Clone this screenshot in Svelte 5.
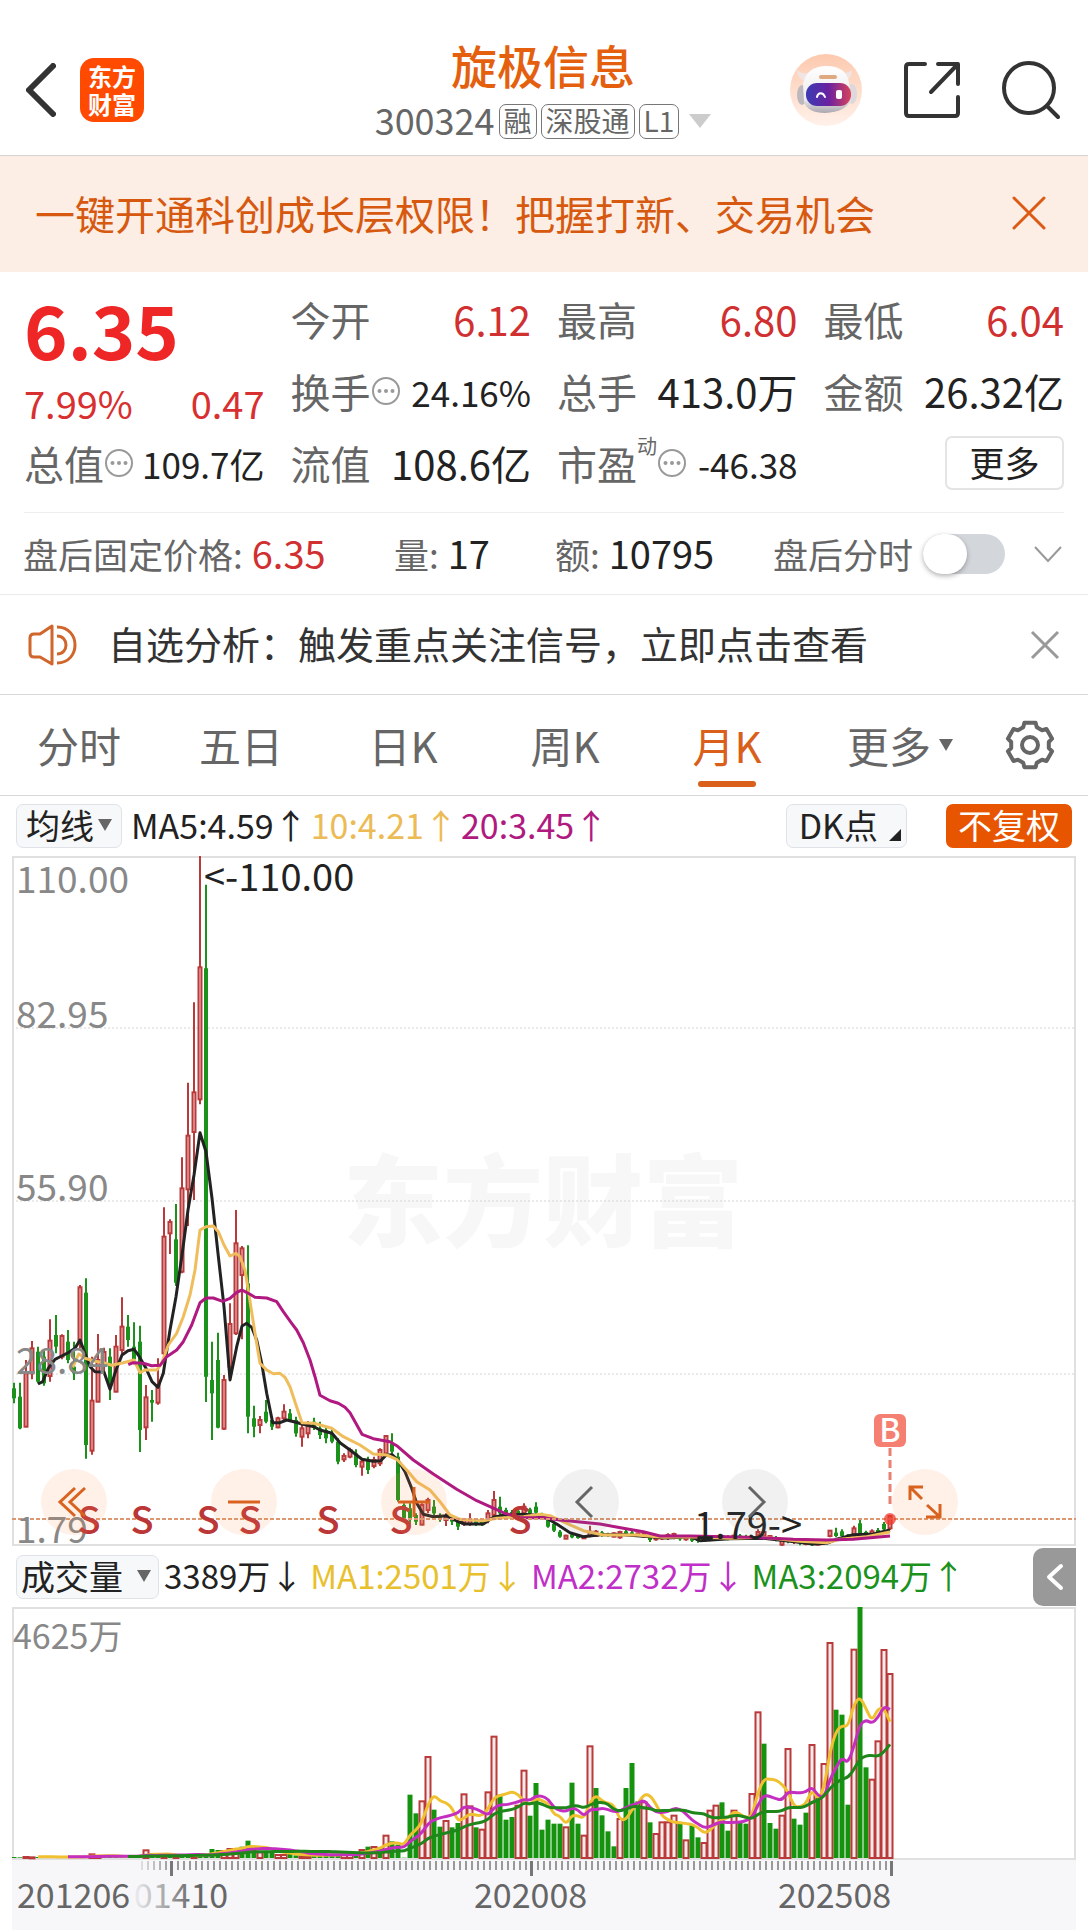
<script>
  // Candles: [direction, high, open/close top, open/close bottom, low], in thirds of a
  // pixel measured from the 55.90 grid line.
  const candles = [
    ['g', 548, 565, 595, 610], ['g', 548, 590, 685, 688], ['r', 480, 520, 680, 682], ['r', 423, 445, 520, 538],
    ['g', 440, 455, 545, 550], ['g', 450, 470, 550, 557], ['r', 358, 422, 528, 545], ['g', 345, 405, 440, 460],
    ['r', 403, 408, 470, 478], ['g', 390, 425, 480, 490], ['g', 425, 500, 520, 540], ['r', 255, 262, 430, 445],
    ['g', 235, 278, 735, 776], ['r', 470, 602, 752, 764], ['r', 402, 480, 605, 607], ['r', 443, 456, 490, 515],
    ['g', 445, 470, 555, 600], ['r', 405, 440, 575, 577], ['r', 292, 380, 450, 462], ['g', 345, 380, 420, 440],
    ['g', 367, 440, 478, 490], ['g', 377, 425, 690, 756], ['r', 555, 592, 682, 720], ['g', 570, 600, 608, 665],
    ['r', 475, 555, 608, 614], ['r', 22, 110, 460, 475], ['r', 58, 66, 100, 162], ['g', 12, 118, 248, 258],
    ['r', -128, -35, 215, 220], ['r', -352, -193, -32, 78], ['r', -593, -323, -204, 0], ['r', -1032, -698, -302, -287],
    ['g', -946, -695, 530, 606], ['g', 425, 540, 580, 720], ['g', 398, 480, 683, 685], ['r', 525, 540, 686, 690],
    ['r', 310, 372, 500, 540], ['r', 30, 130, 400, 405], ['r', 138, 145, 225, 418], ['g', 136, 250, 650, 700],
    ['g', 617, 655, 680, 712], ['r', 648, 660, 675, 700], ['g', 600, 635, 665, 670], ['g', 650, 660, 680, 690],
    ['r', 650, 655, 682, 685], ['r', 613, 635, 655, 660], ['g', 627, 640, 660, 665], ['g', 650, 660, 700, 710],
    ['r', 670, 685, 710, 740], ['r', 663, 670, 700, 715], ['g', 653, 665, 680, 690], ['g', 665, 685, 705, 717],
    ['g', 680, 690, 715, 730], ['g', 685, 700, 725, 730], ['g', 715, 725, 785, 793], ['r', 760, 768, 778, 786],
    ['r', 743, 750, 770, 775], ['g', 748, 760, 795, 802], ['r', 775, 785, 800, 827], ['g', 770, 780, 810, 822],
    ['r', 770, 780, 798, 805], ['r', 745, 750, 790, 798], ['r', 705, 708, 760, 765], ['g', 700, 730, 755, 765],
    ['g', 758, 770, 900, 905], ['g', 910, 915, 955, 960], ['g', 910, 925, 960, 973], ['g', 940, 945, 965, 975],
    ['r', 910, 915, 974, 976], ['r', 893, 900, 930, 940], ['g', 900, 920, 940, 947], ['g', 940, 945, 955, 965],
    ['r', 940, 950, 960, 978], ['g', 950, 955, 965, 975], ['g', 960, 965, 980, 990], ['r', 955, 960, 972, 978],
    ['r', 940, 960, 972, 978], ['g', 958, 962, 972, 978], ['g', 960, 964, 974, 978], ['r', 930, 940, 960, 970],
    ['r', 873, 900, 945, 950], ['g', 890, 920, 940, 947], ['g', 923, 930, 945, 950], ['g', 930, 936, 948, 956],
    ['g', 926, 932, 942, 950], ['r', 910, 920, 940, 950], ['g', 923, 928, 940, 944], ['g', 907, 920, 938, 942],
    ['g', 938, 942, 950, 955], ['g', 955, 960, 980, 983], ['g', 965, 972, 992, 996], ['g', 990, 995, 1010, 1013],
    ['r', 1004, 1007, 1016, 1018], ['g', 1000, 1003, 1012, 1015], ['g', 1004, 1007, 1014, 1016], ['r', 1008, 1010, 1015, 1017],
    ['r', 977, 995, 1008, 1012], ['r', 990, 995, 1008, 1010], ['g', 993, 997, 1008, 1010], ['g', 998, 1000, 1008, 1010],
    ['r', 997, 1000, 1010, 1012], ['r', 992, 996, 1012, 1016], ['g', 990, 994, 1004, 1008], ['g', 993, 997, 1006, 1010],
    ['r', 998, 1000, 1008, 1010], ['r', 998, 1002, 1010, 1012], ['g', 1003, 1008, 1020, 1026], ['r', 1003, 1008, 1018, 1022],
    ['r', 1005, 1009, 1016, 1020], ['r', 1000, 1005, 1014, 1020], ['r', 998, 1002, 1012, 1018], ['g', 1006, 1010, 1018, 1022],
    ['r', 1008, 1011, 1018, 1022], ['g', 1010, 1013, 1022, 1026], ['g', 1014, 1016, 1023, 1028], ['r', 1012, 1015, 1022, 1026],
    ['g', 1010, 1013, 1020, 1024], ['r', 1008, 1011, 1018, 1022], ['r', 1004, 1008, 1015, 1020], ['g', 1006, 1009, 1017, 1021],
    ['r', 1004, 1007, 1014, 1018], ['g', 1002, 1006, 1013, 1017], ['g', 1004, 1008, 1015, 1018], ['g', 1006, 1009, 1016, 1020],
    ['r', 988, 996, 1006, 1012], ['r', 993, 996, 1007, 1010], ['r', 1005, 1008, 1016, 1018], ['g', 1008, 1012, 1020, 1024],
    ['r', 1016, 1020, 1034, 1038], ['g', 1014, 1018, 1026, 1030], ['r', 1016, 1020, 1026, 1032], ['g', 1020, 1024, 1030, 1036],
    ['r', 1022, 1026, 1032, 1036], ['g', 1024, 1028, 1036, 1038], ['r', 1022, 1026, 1034, 1036], ['g', 1018, 1022, 1030, 1034],
    ['r', 990, 992, 1008, 1012], ['g', 983, 998, 1008, 1012], ['g', 988, 994, 1008, 1010], ['g', 1002, 1004, 1012, 1014],
    ['r', 977, 985, 1008, 1010], ['g', 957, 970, 1000, 1004], ['g', 992, 996, 1004, 1006], ['r', 988, 994, 1004, 1006],
    ['g', 984, 990, 1000, 1004], ['g', 966, 972, 988, 995], ['r', 945, 948, 985, 990]
  ];

  const priceLines = [
    { name: 'ma5', points: [[114,552],[128,545],[145,505],[165,478],[185,468],[205,458],[225,445],[240,420],[255,460],[270,500],[285,515],[312,516],[330,568],[348,510],[366,465],[384,452],[402,448],[415,465],[438,505],[456,545],[474,562],[490,520],[510,390],[528,290],[546,165],[564,30],[582,-75],[600,-202],[618,-145],[636,-5],[654,160],[672,320],[690,540],[710,440],[726,378],[740,370],[755,382],[770,420],[785,490],[800,580],[818,668],[840,668],[860,660],[885,666],[906,672],[942,680],[960,690],[996,700],[1020,728],[1050,750],[1086,778],[1120,784],[1142,782],[1158,766],[1176,764],[1194,780],[1215,815],[1235,865],[1250,910],[1270,943],[1300,950],[1340,947],[1370,963],[1395,972],[1450,972],[1480,952],[1510,946],[1570,943],[1610,946],[1640,955],[1670,972],[1710,998],[1750,1010],[1800,1004],[1870,1004],[1950,1010],[2000,1014],[2070,1010],[2100,1022],[2190,1016],[2290,1015],[2370,1024],[2440,1032],[2480,1030],[2510,1018],[2560,1004],[2620,1002],[2670,990]] },
    { name: 'ma10', points: [[218,502],[236,462],[255,475],[280,482],[310,488],[335,496],[370,488],[402,480],[420,518],[435,510],[470,510],[485,490],[505,435],[530,400],[550,350],[570,285],[585,210],[600,90],[618,80],[640,78],[655,95],[672,135],[690,168],[708,160],[720,170],[735,210],[748,290],[765,400],[780,490],[800,510],[820,521],[840,520],[855,532],[870,560],[888,615],[906,668],[942,670],[995,685],[1030,710],[1080,735],[1120,762],[1160,765],[1190,778],[1220,810],[1250,845],[1290,870],[1320,905],[1350,945],[1380,958],[1450,962],[1490,955],[1570,950],[1620,943],[1650,947],[1700,970],[1750,992],[1810,1005],[1910,1005],[1990,1012],[2070,1010],[2190,1015],[2290,1012],[2400,1024],[2480,1028],[2520,1018],[2600,1010],[2670,996]] },
    { name: 'ma20', points: [[385,494],[400,488],[430,490],[455,497],[480,496],[500,470],[530,450],[550,425],[575,375],[600,308],[618,294],[640,294],[668,304],[690,295],[710,277],[726,270],[745,280],[765,292],[800,294],[830,305],[850,335],[875,370],[890,390],[910,428],[930,480],[945,530],[960,586],[990,602],[1015,610],[1035,622],[1050,638],[1086,703],[1120,716],[1170,725],[1190,737],[1240,780],[1300,822],[1370,868],[1430,902],[1510,938],[1560,953],[1630,953],[1680,960],[1800,972],[1870,985],[1930,995],[1980,1008],[2070,1008],[2250,1012],[2380,1018],[2480,1020],[2560,1018],[2670,1008]] }
  ];

  // Monthly volume, in thirds of a pixel.
  const volumes = [
    3, 2, 6, 5, 3, 3, 3, 3, 3, 3, 3, 3, 4, 14, 8, 5, 4, 5, 4, 4, 4, 5, 26, 14, 7, 8, 7, 6, 8, 8, 10, 10, 9,
    27, 24, 24, 30, 30, 34, 52, 28, 20, 22, 18, 12, 12, 12, 8, 8, 8, 8, 9, 10, 9, 11, 12, 12, 14,
    27, 34, 36, 32, 70, 50, 40, 1, 190, 134, 173, 306, 145, 94, 114, 92, 105, 194, 158, 92, 88, 200, 367,
    190, 115, 123, 160, 265, 127, 225, 85, 115, 103, 103, 95, 226, 103, 70, 338, 210, 128, 80, 35, 120,
    210, 285, 170, 170, 107, 75, 110, 110, 130, 108, 56, 100, 62, 48, 145, 160, 167, 82, 145, 105, 103,
    195, 440, 343, 105, 88, 130, 330, 118, 100, 136, 342, 180, 285, 648, 445, 430, 160, 628, 753, 272,
    238, 353, 627, 555
  ];
  const rising = new Set([2, 3, 13, 14, 22, 25, 27, 30, 35, 36, 37, 41, 44, 45, 48, 49, 55, 56, 58, 60, 62, 68, 69, 72, 75, 76, 78, 79, 80, 84, 85, 92, 95, 96, 101, 105, 107, 108, 109, 110, 112, 115, 116, 117, 120, 123, 124, 128, 129, 133, 135, 136, 140, 143, 144, 145, 146]);

  const candleX = (i) => 2 + i * 6;
  const toX = (v) => v / 3 - 12;
  const toY = (v) => v / 3 + 344;

  function smooth(points) {
    let d = `M${points[0][0]} ${points[0][1]}`;
    for (let i = 1; i < points.length - 1; i++) {
      const [x, y] = points[i];
      const mx = (x + points[i + 1][0]) / 2;
      const my = (y + points[i + 1][1]) / 2;
      d += `Q${x} ${y} ${mx} ${my}`;
    }
    const last = points[points.length - 1];
    return d + `L${last[0]} ${last[1]}`;
  }

  function linePath(points) {
    return 'M' + points.map(([x, y]) => `${toX(x).toFixed(1)} ${toY(y).toFixed(1)}`).join('L');
  }

  function average(period) {
    const points = [];
    for (let i = period - 1; i < volumes.length; i++) {
      const sum = volumes.slice(i - period + 1, i + 1).reduce((a, b) => a + b, 0);
      points.push([candleX(i), 251 - sum / period / 3]);
    }
    return smooth(points);
  }

  const volumeLines = [
    { name: 'vol5', d: average(5) },
    { name: 'vol10', d: average(10) },
    { name: 'vol20', d: average(20) }
  ];

  const ticks = Array.from({ length: 126 }, (_, i) => 129 + i * 6);
  const sellMarks = [77, 130, 196, 238, 316, 389, 508];

  const gear = [0, 60, 120, 180, 240, 300]
    .flatMap((c) => [[c - 21, 19], [c - 14, 23], [c + 14, 23], [c + 21, 19]])
    .map(([a, r]) => {
      const t = ((a - 90) * Math.PI) / 180;
      return `${(26 + r * Math.cos(t)).toFixed(1)},${(26 + r * Math.sin(t)).toFixed(1)}`;
    })
    .join(' ');

  const tabs = ['分时', '五日', '日K', '周K', '月K'];
  let activeTab = $state('月K');
  let afterHours = $state(false);
</script>

{#snippet info()}
  <svg class="info" viewBox="0 0 30 30" aria-hidden="true">
    <circle cx="15" cy="15" r="13" fill="none" stroke="#999" stroke-width="2" />
    <circle cx="8.5" cy="15" r="2" fill="#999" /><circle cx="15" cy="15" r="2" fill="#999" /><circle cx="21.5" cy="15" r="2" fill="#999" />
  </svg>
{/snippet}

<div class="page">
  <header>
    <div class="side">
      <button class="plain" aria-label="返回">
        <svg width="30" height="54" viewBox="0 0 30 54"><path d="M27 3 3 27 27 51" fill="none" stroke="#333" stroke-width="6" stroke-linecap="round" stroke-linejoin="round" /></svg>
      </button>
      <a class="logo" href="#home">东方<br />财富</a>
    </div>
    <div class="title">
      <h1>旋极信息</h1>
      <button class="plain code">
        <span class="number">300324</span>
        <span class="tag">融</span><span class="tag">深股通</span><span class="tag">L1</span>
        <svg width="22" height="14" viewBox="0 0 22 14"><path d="M0 0H22L11 14Z" fill="#ccc" /></svg>
      </button>
    </div>
    <div class="side right">
      <button class="plain" aria-label="智能助手">
        <svg width="72" height="72" viewBox="0 0 72 72">
          <defs>
            <linearGradient id="halo" x1="0" y1="0" x2="0" y2="1"><stop offset="0" stop-color="#fdc9ae" /><stop offset="1" stop-color="#fff1ea" /></linearGradient>
            <linearGradient id="visor" x1="0" y1="0" x2="1" y2="0"><stop offset="0" stop-color="#3c3cb4" /><stop offset=".5" stop-color="#6a22a0" /><stop offset="1" stop-color="#d8425c" /></linearGradient>
            <linearGradient id="helmet" x1="0" y1="0" x2="0" y2="1"><stop offset="0" stop-color="#fff" /><stop offset=".7" stop-color="#eeecee" /><stop offset="1" stop-color="#aaa6ae" /></linearGradient>
          </defs>
          <circle cx="36" cy="36" r="36" fill="url(#halo)" />
          <path d="M7 16Q8 27 16 26L21 18Q12 21 7 16ZM62 16Q62 25 55 26L51 18Q58 20 62 16Z" fill="#f1e4e2" />
          <ellipse cx="12" cy="41" rx="5" ry="10" fill="#bdb8be" /><ellipse cx="62" cy="40" rx="5" ry="10" fill="#dcd8dc" />
          <path d="M36 12C50 12 57 18 59 28L61 46Q56 58 35 59Q18 59 14 48L13 30C15 18 24 12 36 12Z" fill="url(#helmet)" />
          <rect x="29" y="21" width="18" height="4" rx="2" fill="#e0aa80" />
          <rect x="16" y="29" width="45" height="23" rx="11" fill="url(#visor)" />
          <path d="M27 43C28 38 33 38 35 43" fill="none" stroke="#fff" stroke-width="2" stroke-linecap="round" />
          <rect x="46" y="36" width="6" height="9" rx="2" fill="#fff" />
        </svg>
      </button>
      <button class="plain" aria-label="分享">
        <svg width="56" height="58" viewBox="0 0 56 58"><path d="M21 3H5Q2 3 2 6V52Q2 55 5 55H51Q54 55 54 52V36M34 3H54V23M53 4 27 31" fill="none" stroke="#333" stroke-width="4" stroke-linecap="round" stroke-linejoin="round" /></svg>
      </button>
      <button class="plain" aria-label="搜索">
        <svg width="58" height="60" viewBox="0 0 58 60"><circle cx="27" cy="28" r="25" fill="none" stroke="#333" stroke-width="4" /><path d="M45 46 56 57" stroke="#333" stroke-width="4" stroke-linecap="round" /></svg>
      </button>
    </div>
  </header>

  <div class="banner">
    <a href="#open">一键开通科创成长层权限！把握打新、交易机会</a>
    <button class="plain" aria-label="关闭">
      <svg width="34" height="34" viewBox="0 0 34 34"><path d="M2 2 32 32M32 2 2 32" stroke="#dc5a14" stroke-width="3" stroke-linecap="round" /></svg>
    </button>
  </div>

  <section class="quote">
    <div class="last">
      <strong>6.35</strong>
      <div class="change"><span>7.99%</span><span>0.47</span></div>
    </div>
    <div class="cell"><span>今开</span><b class="up">6.12</b></div>
    <div class="cell"><span>最高</span><b class="up">6.80</b></div>
    <div class="cell"><span>最低</span><b class="up">6.04</b></div>
    <div class="cell"><span class="key">换手{@render info()}</span><b class="small">24.16%</b></div>
    <div class="cell"><span>总手</span><b>413.0万</b></div>
    <div class="cell"><span>金额</span><b>26.32亿</b></div>
    <div class="cell"><span class="key">总值{@render info()}</span><b class="small">109.7亿</b></div>
    <div class="cell"><span>流值</span><b>108.6亿</b></div>
    <div class="cell"><span class="key">市盈<i>动</i>{@render info()}</span><b class="small">-46.38</b></div>
    <div class="cell end"><button class="more">更多</button></div>
  </section>

  <section class="fixed">
    <div>盘后固定价格:<b class="up">6.35</b></div>
    <div>量:<b>17</b></div>
    <div>额:<b>10795</b></div>
    <div class="after">
      <label for="after">盘后分时</label>
      <input id="after" type="checkbox" role="switch" bind:checked={afterHours} />
      <button class="plain" aria-label="展开">
        <svg width="30" height="18" viewBox="0 0 30 18"><path d="M2 2 15 16 28 2" fill="none" stroke="#999" stroke-width="2" /></svg>
      </button>
    </div>
  </section>

  <div class="notice">
    <svg width="50" height="42" viewBox="0 0 50 42" fill="none" stroke="#d0662b" stroke-width="3" stroke-linejoin="round"><path d="M24 2 12 10H6Q2 10 2 14V29Q2 33 6 33H12L24 40ZM29 3C53 3 53 39 29 39M29 12C41 12 41 30 29 30" /></svg>
    <a href="#signal">自选分析：触发重点关注信号，立即点击查看</a>
    <button class="plain" aria-label="关闭提示">
      <svg width="30" height="30" viewBox="0 0 30 30"><path d="M2 2 28 28M28 2 2 28" stroke="#999" stroke-width="3" /></svg>
    </button>
  </div>

  <nav>
    {#each tabs as tab}
      <button class="tab" class:active={tab === activeTab} onclick={() => (activeTab = tab)}>{tab}</button>
    {/each}
    <button class="tab dropdown">更多<svg width="14" height="12" viewBox="0 0 14 12"><path d="M0 0H14L7 12Z" fill="#666" /></svg></button>
    <button class="plain gear" aria-label="设置">
      <svg width="52" height="52" viewBox="0 0 52 52" fill="none" stroke="#666" stroke-width="4"><polygon points={gear} stroke-linejoin="round" /><circle cx="26" cy="26" r="8" /></svg>
    </button>
  </nav>

  <div class="legend price">
    <button class="chip">均线<svg width="14" height="12" viewBox="0 0 14 12"><path d="M0 0H14L7 12Z" fill="#666" /></svg></button>
    <span class="black">MA5:4.59↑</span><span class="gold">10:4.21↑</span><span class="plum">20:3.45↑</span>
    <button class="chip dk">DK点<svg width="12" height="12" viewBox="0 0 12 12"><path d="M12 0V12H0Z" fill="#222" /></svg></button>
    <button class="adjust">不复权</button>
  </div>

  <div class="chart">
    <svg class="plot" viewBox="0 0 1064 690" role="img" aria-label="月K线图">
      <text class="watermark" x="331" y="383">东方财富</text>
      {#each [172, 345, 518] as y}
        <line x1="0" x2="1064" y1={y} y2={y} stroke="#d4d4d4" stroke-width="1" stroke-dasharray="2 2" />
      {/each}
      <path d="M1 0V690M1063 0V690" stroke="#e0e0e0" stroke-width="2" />
      <path d="M0 1H1064M0 689H1064" stroke="#e0e0e0" stroke-width="2" />
      {#each candles as [dir, high, top, bottom, low], i}
        {#if dir === 'r'}
          <path d="M{candleX(i)} {toY(high)}V{toY(top)}M{candleX(i)} {toY(bottom)}V{toY(low)}" stroke="#b93a3a" stroke-width="2" />
          <rect x={candleX(i) - 1.5} y={toY(top)} width="3" height={(bottom - top) / 3} fill="#f3cccc" stroke="#b93a3a" stroke-width="2" />
        {:else}
          <path d="M{candleX(i)} {toY(high)}V{toY(low)}" stroke="#1b921b" stroke-width="2" />
          <path d="M{candleX(i)} {toY(top)}V{toY(bottom)}" stroke="#1b921b" stroke-width="4" />
        {/if}
      {/each}
      {#each priceLines as line}
        <path class="line {line.name}" d={linePath(line.points)} />
      {/each}
      <line x1="0" x2="1064" y1="663" y2="663" stroke="#dc9870" stroke-width="2" stroke-dasharray="4 2" />
      <g class="scale">
        <text x="4" y="37">110.00</text>
        <text x="4" y="172">82.95</text>
        <text x="4" y="345">55.90</text>
        <text x="4" y="518">28.84</text>
        <text x="4" y="687">1.79</text>
      </g>
      <g class="extreme">
        <text x="192" y="35">{'<-110.00'}</text>
        <text x="682" y="683">{'1.79->'}</text>
      </g>
      {#each sellMarks as x}
        <text class="sell" {x} y="678">S</text>
      {/each}
      <line x1="878" x2="878" y1="592" y2="650" stroke="#ea8072" stroke-width="3" stroke-dasharray="8 4" />
      <circle cx="878" cy="663" r="6" fill="#f0392b" fill-opacity=".75" />
      <rect x="862" y="558" width="32" height="33" rx="6" fill="#f58072" />
      <text class="buy" x="878" y="586">B</text>
    </svg>
    <button class="round warm one" aria-label="最早"><svg viewBox="0 0 66 66"><path d="M34 19 19 33 34 47M44 19 29 33 44 47" stroke="#d9631e" /></svg></button>
    <button class="round warm two" aria-label="缩小"><svg viewBox="0 0 66 66"><path d="M17 33H49" stroke="#d9631e" /></svg></button>
    <button class="round warm three" aria-label="放大"><svg viewBox="0 0 66 66"><path d="M17 33H49M33 18V48" stroke="#d9631e" /></svg></button>
    <button class="round four" aria-label="左移"><svg viewBox="0 0 66 66"><path d="M39 18 24 33 39 48" stroke="#666" /></svg></button>
    <button class="round five" aria-label="右移"><svg viewBox="0 0 66 66"><path d="M27 18 42 33 27 48" stroke="#666" /></svg></button>
    <button class="round warm six" aria-label="全屏"><svg viewBox="0 0 66 66"><path d="M18 31V18H31M18 18 30 30M35 36 48 48M48 35V48H34" stroke="#d9631e" /></svg></button>
  </div>

  <div class="legend volume">
    <button class="chip">成交量<svg width="14" height="12" viewBox="0 0 14 12"><path d="M0 0H14L7 12Z" fill="#666" /></svg></button>
    <span class="black">3389万↓</span><span class="yellow">MA1:2501万↓</span><span class="violet">MA2:2732万↓</span><span class="green">MA3:2094万↑</span>
    <button class="collapse" aria-label="收起"><svg width="18" height="28" viewBox="0 0 18 28"><path d="M15 3 3 14 15 25" fill="none" stroke="#fff" stroke-width="4" stroke-linecap="round" stroke-linejoin="round" /></svg></button>
  </div>

  <div class="bars">
    <svg viewBox="0 0 1064 323" role="img" aria-label="成交量图">
      <defs>
        <linearGradient id="fade" gradientUnits="userSpaceOnUse" x1="118" y1="0" x2="182" y2="0"><stop offset="0" stop-color="#666" stop-opacity="0" /><stop offset="1" stop-color="#666" /></linearGradient>
      </defs>
      <rect x="0" y="253" width="1064" height="70" fill="#f7f7fa" />
      <path d="M0 1H1064M0 252H1064" stroke="#e0e0e0" stroke-width="2" />
      <path d="M1 0V252M1063 0V252" stroke="#e0e0e0" stroke-width="2" />
      {#each volumes as v, i}
        {#if rising.has(i)}
          <rect x={candleX(i) - 2.5} y={252 - v / 3} width="5" height={Math.max(v / 3 - 1, 1)} fill="#fdeaea" stroke="#b93a3a" stroke-width="2" />
        {:else}
          <rect x={candleX(i) - 2.5} y={251 - v / 3} width="5" height={v / 3} fill="#15930f" />
        {/if}
      {/each}
      {#each volumeLines as line}
        <path class="line {line.name}" d={line.d} />
      {/each}
      <text class="peak" x="1" y="42">4625万</text>
      {#each ticks as x}
        <rect {x} y="254" width="2" height="9" fill={x < 165 ? 'url(#fade)' : '#999'} />
      {/each}
      {#each [158, 518, 878] as x}
        <rect {x} y="254" width="3" height="15" fill="#777" />
      {/each}
      <g class="dates">
        <text x="5" y="301">201206</text>
        <text x="103" y="301" fill="url(#fade)">201410</text>
        <text x="462" y="301">202008</text>
        <text x="766" y="301">202508</text>
      </g>
    </svg>
  </div>
</div>

<style>
  :global(body) {
    margin: 0;
    background: #fff;
  }
  .page {
    font-family: 'Noto Sans CJK SC', sans-serif;
    color: #666;
    background: #fff;
  }
  button {
    font: inherit;
    color: inherit;
    cursor: pointer;
  }
  a {
    color: inherit;
    text-decoration: none;
  }
  b {
    font-weight: 400;
  }
  svg {
    display: block;
    flex: none;
  }
  .plain {
    display: flex;
    padding: 0;
    border: 0;
    background: none;
  }
  header {
    display: grid;
    grid-template-columns: 1fr auto 1fr;
    align-items: center;
    box-sizing: border-box;
    height: 156px;
    padding: 25px 28px 0 26px;
    border-bottom: 1px solid #d4d4d4;
  }
  .side {
    display: flex;
    align-items: center;
    gap: 24px;
  }
  .right {
    justify-content: flex-end;
    gap: 42px;
  }
  .logo {
    padding: 4px 8px;
    border-radius: 14px;
    background: #ff4a00;
    color: #fff;
    font-size: 24px;
    font-weight: 700;
    line-height: 28px;
  }
  .title {
    display: flex;
    flex-direction: column;
    align-items: center;
    gap: 14px;
  }
  h1 {
    margin: 0;
    color: #e4600f;
    font-size: 46px;
    font-weight: 500;
    line-height: 48px;
  }
  .code {
    align-items: center;
    gap: 4px;
  }
  .number {
    padding-bottom: 4px;
    font-size: 36px;
    line-height: 34px;
  }
  .tag {
    padding: 0 4px 2px;
    border: 1px solid #777;
    border-radius: 7px;
    font-size: 28px;
    line-height: 31px;
  }
  .code svg {
    margin-left: 6px;
  }
  .banner {
    display: flex;
    align-items: center;
    justify-content: space-between;
    padding: 0 42px 2px 35px;
    background: #fcede5;
    color: #d6590f;
    font-size: 40px;
    line-height: 114px;
  }
  .quote {
    display: grid;
    grid-template-columns: repeat(4, 1fr);
    grid-auto-rows: 72px;
    column-gap: 26px;
    margin: 0 24px;
    padding: 11px 0 13px;
    border-bottom: 1px solid #eee;
    font-size: 40px;
  }
  .last {
    grid-row: span 2;
    color: #ee2626;
  }
  .last strong {
    display: block;
    font-size: 74px;
    font-weight: 700;
    line-height: 90px;
  }
  .change {
    display: flex;
    justify-content: space-between;
    color: #d83030;
    font-size: 38px;
    line-height: 60px;
  }
  .cell {
    display: flex;
    align-items: center;
    justify-content: space-between;
    white-space: nowrap;
  }
  .cell b {
    color: #222;
  }
  .cell .up,
  .fixed .up {
    color: #d03030;
  }
  .cell .small {
    font-size: 35px;
  }
  .key {
    display: flex;
    align-items: center;
  }
  .key i {
    align-self: flex-start;
    font-size: 20px;
    font-style: normal;
    line-height: 24px;
  }
  .info {
    width: 30px;
    height: 30px;
  }
  .cell.end {
    justify-content: flex-end;
  }
  .more {
    box-sizing: border-box;
    width: 119px;
    padding: 0 0 2px;
    border: 2px solid #e4e4e4;
    border-radius: 7px;
    background: #fff;
    color: #222;
    font-size: 35px;
    line-height: 48px;
  }
  .fixed {
    display: grid;
    grid-template-columns: 371fr 161fr 218fr 290fr;
    padding: 0 25px 0 23px;
    border-bottom: 1px solid #eaeaea;
    font-size: 35px;
    line-height: 81px;
    white-space: nowrap;
  }
  .fixed b {
    margin-left: 9px;
    color: #222;
    font-size: 38px;
    line-height: 40px;
  }
  .after {
    display: flex;
    align-items: center;
    justify-content: space-between;
  }
  .after input {
    display: flex;
    align-items: center;
    appearance: none;
    width: 82px;
    height: 40px;
    margin: 0 18px 0 0;
    border-radius: 20px;
    background: #d3d6db;
  }
  .after input::before {
    content: '';
    width: 44px;
    height: 40px;
    border-radius: 20px;
    background: #fff;
    box-shadow: 0 2px 5px rgba(0, 0, 0, 0.3);
  }
  .after input:checked {
    justify-content: flex-end;
    background: #e85500;
  }
  .notice {
    display: flex;
    align-items: center;
    padding: 0 28px;
    border-bottom: 1px solid #d8d8d8;
    color: #333;
    font-size: 38px;
    line-height: 95px;
  }
  .notice a {
    flex: 1;
    margin-left: 30px;
    padding-bottom: 4px;
  }
  nav {
    display: grid;
    grid-template-columns: repeat(6, 162fr) 116fr;
    border-bottom: 1px solid #d8d8d8;
    font-size: 42px;
    line-height: 100px;
  }
  .tab {
    position: relative;
    padding: 0 4px 0 0;
    border: 0;
    background: none;
  }
  .tab.active {
    color: #d95f1a;
  }
  .tab.active::after {
    content: '';
    position: absolute;
    right: 4px;
    bottom: 8px;
    left: 0;
    width: 58px;
    height: 6px;
    margin: 0 auto;
    border-radius: 3px;
    background: #d95f1a;
  }
  .dropdown svg {
    position: absolute;
    top: 44px;
    right: 19px;
  }
  .gear {
    align-items: center;
    justify-content: center;
  }
  .legend {
    display: flex;
    align-items: center;
    white-space: nowrap;
  }
  .legend span {
    padding-bottom: 4px;
  }
  .price {
    height: 60px;
    padding: 0 16px;
    font-size: 34px;
    gap: 3px;
  }
  .chip {
    display: flex;
    align-items: center;
    gap: 4px;
    padding: 0 9px 2px;
    border: 1px solid #dfe3e8;
    border-radius: 7px;
    background: #f6f8fa;
    color: #222;
    font-size: 34px;
    line-height: 40px;
  }
  .price .chip {
    margin-right: 6px;
  }
  .price .dk {
    gap: 11px;
    margin: 0 36px 0 auto;
    padding: 0 5px 2px 12px;
  }
  .dk svg {
    align-self: flex-end;
    margin-bottom: 4px;
  }
  .adjust {
    padding: 0 12px 2px;
    border: 0;
    border-radius: 7px;
    background: #e85500;
    color: #fff;
    line-height: 42px;
  }
  .black {
    color: #222;
  }
  .gold {
    color: #ecbb55;
  }
  .plum {
    color: #b01a80;
  }
  .yellow {
    color: #e8c02c;
  }
  .violet {
    color: #c030c8;
  }
  .green {
    color: #1b921b;
  }
  .chart,
  .bars {
    position: relative;
    margin: 0 12px;
  }
  .plot,
  .bars svg {
    width: 100%;
  }
  .round {
    position: absolute;
    top: 88.8%;
    width: 66px;
    height: 66px;
    padding: 0;
    border: 0;
    border-radius: 50%;
    background: rgba(120, 120, 120, 0.1);
  }
  .warm {
    background: rgba(255, 140, 80, 0.13);
  }
  .round path {
    fill: none;
    stroke-width: 3;
  }
  .one {
    left: 2.7%;
  }
  .two {
    left: 18.7%;
  }
  .three {
    left: 34.7%;
  }
  .four {
    left: 50.8%;
  }
  .five {
    left: 66.7%;
  }
  .six {
    left: 82.7%;
  }
  .watermark {
    fill: #f7f7f7;
    font-size: 100px;
    font-weight: 900;
  }
  .line {
    fill: none;
    stroke-width: 3;
    stroke-linejoin: round;
  }
  .ma5 {
    stroke: #222;
  }
  .ma10 {
    stroke: #efbd5c;
  }
  .ma20 {
    stroke: #b01a80;
  }
  .vol5 {
    stroke: #efc02f;
  }
  .vol10 {
    stroke: #c42fc0;
  }
  .vol20 {
    stroke: #1f861c;
  }
  .scale {
    fill: #888;
    font-size: 37px;
  }
  .extreme {
    fill: #222;
    font-size: 38px;
  }
  .sell {
    fill: #bb3636;
    font-size: 38px;
    font-weight: 500;
    text-anchor: middle;
  }
  .buy {
    fill: #fff;
    font-size: 32px;
    font-weight: 500;
    text-anchor: middle;
  }
  .peak {
    fill: #888;
    font-size: 34px;
  }
  .dates {
    fill: #666;
    font-size: 34px;
  }
  .volume {
    height: 61px;
    padding: 0 12px 0 16px;
    font-size: 33px;
    gap: 7px;
  }
  .volume .chip {
    gap: 14px;
    margin-right: -2px;
    padding: 0 7px 2px 4px;
  }
  .collapse {
    display: flex;
    align-items: center;
    justify-content: center;
    width: 43px;
    height: 58px;
    margin-left: auto;
    padding: 0;
    border: 0;
    border-radius: 10px 0 0 10px;
    background: #999;
  }
</style>
